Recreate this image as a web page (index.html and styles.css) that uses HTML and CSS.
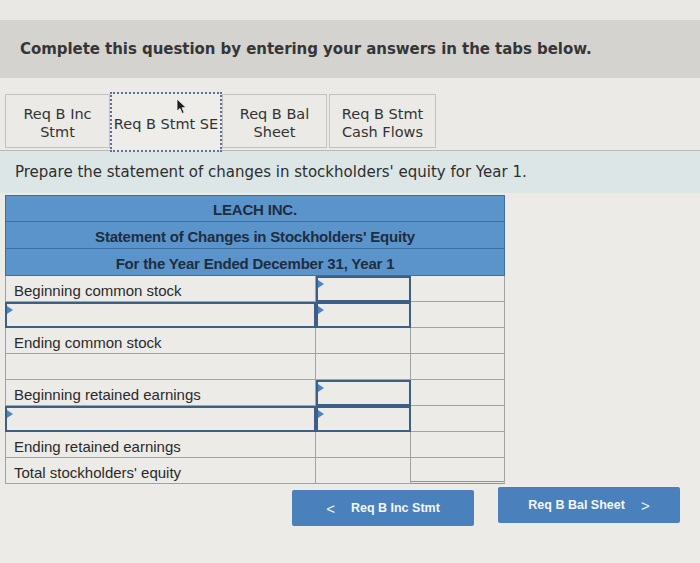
FILE: index.html
```html
<!DOCTYPE html>
<html>
<head>
<meta charset="utf-8">
<link rel="stylesheet" href="styles.css">
</head>
<body>
<div class="top"></div>
<div class="banner"><h2 class="title">Complete this question by entering your answers in the tabs below.</h2></div>
<div class="tabbar">
  <div class="tab">Req B Inc<br>Stmt</div>
  <div class="tab active">Req B Stmt SE
    <svg class="cursor" width="12" height="17" viewBox="0 0 12 17"><path d="M1 1 L1 13 L4 10.5 L6.2 15.5 L8.2 14.6 L6 9.8 L10 9.6 Z" fill="#1e1e1e" stroke="#f2f2f2" stroke-width="0.8"/></svg>
  </div>
  <div class="tab">Req B Bal<br>Sheet</div>
  <div class="tab last">Req B Stmt<br>Cash Flows</div>
</div>
<div class="instr">Prepare the statement of changes in stockholders' equity for Year 1.</div>
<div class="content">
  <div class="sheet">
    <div class="hrow">LEACH INC.</div>
    <div class="hrow">Statement of Changes in Stockholders' Equity</div>
    <div class="hrow">For the Year Ended December 31, Year 1</div>
    <div class="row"><div class="c lbl">Beginning common stock</div><div class="c amt inp"></div><div class="c amt"></div></div>
    <div class="row"><div class="c lbl inp"></div><div class="c amt inp"></div><div class="c amt"></div></div>
    <div class="row"><div class="c lbl">Ending common stock</div><div class="c amt"></div><div class="c amt"></div></div>
    <div class="row"><div class="c lbl"></div><div class="c amt"></div><div class="c amt"></div></div>
    <div class="row"><div class="c lbl">Beginning retained earnings</div><div class="c amt inp"></div><div class="c amt"></div></div>
    <div class="row"><div class="c lbl inp"></div><div class="c amt inp"></div><div class="c amt"></div></div>
    <div class="row"><div class="c lbl">Ending retained earnings</div><div class="c amt"></div><div class="c amt"></div></div>
    <div class="row"><div class="c lbl">Total stockholders' equity</div><div class="c amt"></div><div class="c amt dbl"></div></div>
  </div>
  <div class="navs">
    <div class="btn prev"><span class="chev">&lt;</span>Req B Inc Stmt</div>
    <div class="btn next">Req B Bal Sheet<span class="chev">&gt;</span></div>
  </div>
</div>
</body>
</html>
```
FILE: styles.css
```css
html, body { margin: 0; padding: 0; }
body { background: #ecebe8; width: 700px; height: 563px; overflow: hidden; font-family: "DejaVu Sans", Verdana, sans-serif; color: #2e2e2e; }
.top { height: 20px; background: #e9e8e5; }
.banner { height: 58px; background: #d4d3d0; display: flex; align-items: center; padding-left: 20px; }
.title { margin: 0; font-size: 15px; font-weight: bold; color: #363636; letter-spacing: -0.05px; }
.tabbar { display: flex; padding: 14px 0 0 5px; height: 58px; background: #ebeae7; border-bottom: 1px solid #b9bab8; }
.tab { position: relative; width: 105px; height: 54px; margin-top: 2px; box-sizing: border-box; display: flex; align-items: center; justify-content: center; padding-top: 3px; text-align: center; font-size: 14.5px; line-height: 18px; color: #333; background: #ebeae6; border: 1px solid #c2c2bf; }
.tab.active { width: 112px; height: 60px; margin-top: 0; border: 2px dotted #5a6fa0; background: #eeede9; }
.tab.last { width: 107px; margin-left: 2px; }
.cursor { position: absolute; left: 64px; top: 4px; }
.instr { height: 42px; background: #dde6e7; padding-left: 15px; display: flex; align-items: center; font-size: 15px; color: #2e2e2e; }
.content { padding: 2px 0 0 5px; }
.sheet { width: 500px; font-family: "Liberation Sans", Arial, sans-serif; }
.hrow { height: 26px; background: #5b94cb; border: 1px solid #3f6f9f; border-top: none; display: flex; align-items: center; justify-content: center; padding-top: 2px; box-sizing: border-box; height: 27px; font-weight: bold; font-size: 15px; color: #1e2d40; letter-spacing: -0.2px; }
.hrow:first-child { border-top: 1px solid #3f6f9f; }
.row { display: flex; height: 26px; }
.c { border-right: 1px solid #9fa3a4; border-bottom: 1px solid #9fa3a4; box-sizing: border-box; position: relative; font-size: 15px; color: #2a2a2a; display: flex; align-items: center; padding-top: 3px; }
.lbl { width: 311px; padding-left: 8px; border-left: 1px solid #9fa3a4; }
.amt { width: 95px; }
.amt:last-child { width: 94px; }
.inp { border: 2px solid #3d5f86; }
.inp::before { content: ""; position: absolute; left: 0; top: 2px; border-left: 6px solid #4a86c5; border-top: 4px solid transparent; border-bottom: 4px solid transparent; }
.dbl { border-bottom: 3px double #8e9293; }
.navs { display: flex; gap: 24px; padding: 6px 0 0 287px; }
.btn { width: 182px; height: 36px; background: #4a80bb; color: #f4f7fb; border-radius: 2px; font-family: "Liberation Sans", Arial, sans-serif; font-weight: bold; font-size: 12.5px; display: flex; align-items: center; justify-content: center; gap: 16px; }
.btn.next { margin-top: -3px; }
.chev { font-weight: normal; font-size: 15px; }
```
